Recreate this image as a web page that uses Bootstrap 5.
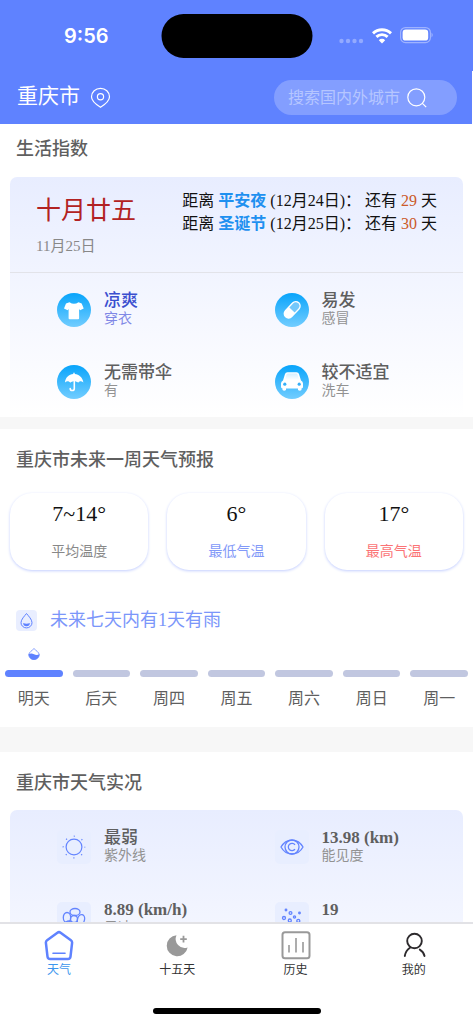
<!DOCTYPE html>
<html lang="zh-CN">
<head>
<meta charset="utf-8">
<meta name="viewport" content="width=device-width, initial-scale=1">
<title>天气</title>
<link href="https://cdn.jsdelivr.net/npm/bootstrap@5.3.0/dist/css/bootstrap.min.css" rel="stylesheet">
<style>
  :root { --brand: #5f82ff; --ink: #5f5f5f; --muted: #929292; }
  body { font-family: "Liberation Serif", "Noto Sans CJK SC", serif; color: #111; background: #fff; line-height: 24px; }
  svg { display: block; flex: none; }
  .brand-bg { background: var(--brand); }

  .status { height: 71px; padding: 0 40px 0 64px; font: 600 20px/24px Inter, sans-serif; }
  .island { width: 151px; height: 44px; left: 50%; top: 14px; transform: translateX(-50%); border-radius: 22px; background: #000; }
  .topbar { height: 53px; padding: 0 15px 0 17px; }
  .city { font-size: 21px; padding-bottom: 4px; }
  .search { width: 183px; height: 35px; padding: 0 30px 0 14px; background: #839eff; }
  .search input { min-width: 0; font-size: 16px; line-height: 24px; background: none; outline: 0; font-family: inherit; color: #fff; }
  .search input::placeholder { color: #b6c6ff; opacity: 1; }

  .feed { min-height: 0; scrollbar-width: none; }
  .feed::-webkit-scrollbar { display: none; }
  .heading { font-size: 18px; line-height: 24px; font-weight: 500; color: var(--ink); margin: 0; padding: 13px 16px 16px; }
  .heading-lg { padding-top: 19px; padding-bottom: 15px; }
  .divider { height: 12px; background: #f7f7f7; }
  .divider-lg { height: 25px; }

  .panel { margin: 0 10px; padding-bottom: 9px; border-radius: 7px 7px 0 0; background: linear-gradient(#e8edff, #fff 240px); }
  .almanac { height: 96px; padding: 12px 26px 0 26px; border-bottom: 1px solid #e2e3e9; }
  .lunar { font-size: 25px; line-height: 44px; color: #b22222; }
  .solar { font-size: 15px; line-height: 26px; color: #888; }
  .countdown { font-size: 16px; line-height: 23px; white-space: nowrap; }
  .countdown strong { color: #1e90f0; }
  .days { color: #cb5a28; }

  .facts { padding: 19px 9px 0; row-gap: 36px; }
  .fact { padding-left: 38px; gap: 13px; height: 36px; }
  .fact-name { font-size: 17px; line-height: 18px; font-weight: 500; color: var(--ink); }
  .fact-note { font-size: 14px; line-height: 18px; color: var(--muted); }
  .fact.active .fact-name { color: #3b4fcf; }
  .fact.active .fact-note { color: #8088e6; }

  .temps { gap: 19px; padding: 6px 10px 0; }
  .temp { height: 77px; border-radius: 22px; box-shadow: 0 1px 3px #c3ceff; background: #fff; padding-top: 9px; }
  .temp-value { font-size: 22px; line-height: 24px; }
  .temp-label { font-size: 14px; line-height: 24px; margin-top: 14px; color: #888; }
  .low { color: #8299f8; }
  .high { color: #fb7476; }
  .rain { font-size: 18px; color: #7b96fa; gap: 13px; padding: 38px 16px 16px; }
  .day { padding: 0 5px; font-size: 16px; color: var(--ink); }
  .day-mark { height: 12px; margin-bottom: 10px; }
  .day-bar { height: 7px; border-radius: 4px; background: #c1c7e0; margin-bottom: 10px; }
  .day-bar.on { background: var(--brand); }

  .tabs { border-top: 2px solid #e2e2e6; height: 102px; }
  .tab { color: #333; font-size: 12px; line-height: 16px; padding-top: 6px; gap: 1px; text-decoration: none; }
  .tab.active { color: #3c96ee; }
  .home-bar { width: 168px; height: 6px; border-radius: 3px; background: #000; margin: 0 auto 10px; }
</style>
</head>
<body class="vh-100 d-flex flex-column overflow-hidden">
<svg width="0" height="0" class="position-absolute" aria-hidden="true">
  <defs>
    <linearGradient id="sky" x2="0" y2="1"><stop stop-color="#08a4fb"/><stop offset="1" stop-color="#72cdff"/></linearGradient>
    <linearGradient id="fade" x2="0" y2="1"><stop stop-color="#d5efff"/><stop offset="1" stop-color="#fff"/></linearGradient>
  </defs>
</svg>

<header class="brand-bg text-white flex-shrink-0">
  <div class="status position-relative d-flex align-items-center justify-content-between">
    <span>9:56</span>
    <span class="island position-absolute"></span>
    <span class="d-flex align-items-center gap-2">
      <svg width="25" height="18" viewBox="0 0 25 18" fill="#93aaff"><circle cx="2.500" cy="14" r="2.200"/><circle cx="9" cy="14" r="2.200"/><circle cx="15.500" cy="14" r="2.200"/><circle cx="22" cy="14" r="2.200"/></svg>
      <svg width="20" height="16" viewBox="0 0 20 16" fill="none" stroke="#fff" stroke-width="2.900"><path d="M1 5.400a13 13 0 0 1 18 0"/><path d="M4.400 8.900a8 8 0 0 1 11.200 0"/><path d="M10 15.500l3.200-3.300a4.500 4.500 0 0 0-6.400 0z" fill="#fff" stroke="none"/></svg>
      <svg width="33" height="17" viewBox="0 0 33 17"><rect x=".6" y=".6" width="29.800" height="15" rx="4.800" fill="none" stroke="#9fb3ff" stroke-width="1.200"/><rect x="2.600" y="2.600" width="25.600" height="11" rx="3.200" fill="#fff"/><path d="M31.500 5.500q2.500 2.500 0 5z" fill="#9fb3ff"/></svg>
    </span>
  </div>
  <div class="topbar d-flex align-items-center border-end border-white">
    <span class="city">重庆市</span>
    <svg class="ms-2" width="24" height="22" viewBox="0 0 24 22" fill="none" stroke="#fff" stroke-width="1.200"><path d="M12.500 20.200C9.500 18.400 3.500 14.600 3.500 9.800a9 8.500 0 0 1 18 0c0 4.800-6 8.600-9 10.400z"/><circle cx="12.500" cy="9.700" r="3.100"/></svg>
    <label class="search ms-auto d-flex align-items-center rounded-pill">
      <input type="text" class="border-0 p-0 flex-fill" placeholder="搜索国内外城市" aria-label="搜索国内外城市">
      <svg width="20" height="20" viewBox="0 0 20 20" fill="none" stroke="#fff" stroke-width="1.200"><circle cx="9.300" cy="9.300" r="8.500"/><path d="M15.400 15.400l3.800 3.800"/></svg>
    </label>
  </div>
</header>

<main class="feed flex-fill overflow-auto">
  <section>
    <h2 class="heading">生活指数</h2>
    <div class="panel">
      <div class="almanac d-flex justify-content-between">
        <div>
          <div class="lunar">十月廿五</div>
          <div class="solar">11月25日</div>
        </div>
        <div class="countdown">
          <div>距离 <strong>平安夜</strong> (12月24日)： 还有 <span class="days">29</span> 天</div>
          <div>距离 <strong>圣诞节</strong> (12月25日)： 还有 <span class="days">30</span> 天</div>
        </div>
      </div>
      <div class="facts row g-0 pb-2">
        <div class="col-6 fact active d-flex align-items-center">
          <svg width="34" height="34" viewBox="0 0 34 34"><circle cx="17" cy="17" r="17" fill="url(#sky)"/><path d="M12.500 9.200q4.500 3 9 0l3.200 1.300 2 5-3.600 1.700-1-1.200v9.200q0 1-1 1h-8.500q-1 0-1-1V16l-1 1.200L7 15.500l2-5z" fill="#fff"/></svg>
          <div><div class="fact-name">凉爽</div><div class="fact-note">穿衣</div></div>
        </div>
        <div class="col-6 fact d-flex align-items-center">
          <svg width="34" height="34" viewBox="0 0 34 34"><circle cx="17" cy="17" r="17" fill="url(#sky)"/><g transform="rotate(-47 17 17)"><rect x="7" y="12" width="20.500" height="10" rx="5" fill="#fff"/><path d="M17 13.400h5.500a3.600 3.600 0 0 1 0 7.200H17z" fill="#74c8fb"/></g></svg>
          <div><div class="fact-name">易发</div><div class="fact-note">感冒</div></div>
        </div>
        <div class="col-6 fact d-flex align-items-center">
          <svg width="34" height="34" viewBox="0 0 34 34"><circle cx="17" cy="17" r="17" fill="url(#sky)"/><path d="M8 17.500C8.500 12 12 9.500 16.300 9V8q.7-1 1.400 0v1c4.300.5 7.800 3 8.700 8.500-2.200-1.800-4-1.500-5.200.3-2.300-2-5.700-2-8 0-1.200-1.800-3.200-2.100-5.200-.3z" fill="#fff"/><path d="M17.300 16v7.500a2 2 0 0 1-4.100 0" fill="none" stroke="#fff" stroke-width="1.600" stroke-linecap="round"/></svg>
          <div><div class="fact-name">无需带伞</div><div class="fact-note">有</div></div>
        </div>
        <div class="col-6 fact d-flex align-items-center">
          <svg width="34" height="34" viewBox="0 0 34 34"><circle cx="17" cy="17" r="17" fill="url(#sky)"/><path d="M8 15.500L10 9q.5-1.800 2.500-1.800h9Q23.500 7.200 24 9l2 6.500q2 1 2 3V22q0 1.300-1.500 1.500V25q-1.700 1.600-3.500 0v-1.500H11V25q-1.800 1.600-3.500 0v-1.500Q6 23.300 6 22v-3.500q0-2 2-3z" fill="#fff"/><path d="M10 14.800l1.500-5.300q.3-1 1.500-1h8q1.200 0 1.500 1l1.500 5.300z" fill="url(#fade)"/><circle cx="9.800" cy="19.200" r="1.600" fill="#35aff8"/><circle cx="24.200" cy="19.200" r="1.600" fill="#35aff8"/></svg>
          <div><div class="fact-name">较不适宜</div><div class="fact-note">洗车</div></div>
        </div>
      </div>
    </div>
  </section>
  <div class="divider"></div>

  <section>
    <h2 class="heading heading-lg">重庆市未来一周天气预报</h2>
    <div class="temps d-flex text-center">
      <div class="temp flex-fill w-100"><div class="temp-value">7~14°</div><div class="temp-label">平均温度</div></div>
      <div class="temp flex-fill w-100"><div class="temp-value">6°</div><div class="temp-label low">最低气温</div></div>
      <div class="temp flex-fill w-100"><div class="temp-value">17°</div><div class="temp-label high">最高气温</div></div>
    </div>
    <div class="rain d-flex align-items-center">
      <svg width="21" height="21" viewBox="0 0 21 21"><rect width="21" height="21" rx="4" fill="#e9eeff"/><path d="M10.500 3.500C8.500 6 5 9.500 5 12.700a5.500 5.200 0 0 0 11 0C16 9.500 12.500 6 10.500 3.500z" fill="none" stroke="#5f82ff"/><path d="M7.200 13q3.300 1.500 6.600 0a3.300 3.300 0 0 1-6.600 0z" fill="#5f82ff"/></svg>
      <span>未来七天内有1天有雨</span>
    </div>
    <div class="d-flex text-center pb-3">
      <div class="day flex-fill w-100"><div class="day-mark d-flex justify-content-center"><svg width="12" height="12" viewBox="0 0 12 12"><path d="M6 .5C4.500 2.300.8 4.300.8 6.600a5.200 5 0 0 0 10.400 0C11.200 4.300 7.500 2.300 6 .5z" fill="#fff" stroke="#8aa3ff"/><path d="M.5 6.200q2.700-1.600 5.500 0t5.500-.2A5.500 5.600 0 0 1 .5 6.200z" fill="#5f82ff"/></svg></div><div class="day-bar on"></div>明天</div>
      <div class="day flex-fill w-100"><div class="day-mark"></div><div class="day-bar"></div>后天</div>
      <div class="day flex-fill w-100"><div class="day-mark"></div><div class="day-bar"></div>周四</div>
      <div class="day flex-fill w-100"><div class="day-mark"></div><div class="day-bar"></div>周五</div>
      <div class="day flex-fill w-100"><div class="day-mark"></div><div class="day-bar"></div>周六</div>
      <div class="day flex-fill w-100"><div class="day-mark"></div><div class="day-bar"></div>周日</div>
      <div class="day flex-fill w-100"><div class="day-mark"></div><div class="day-bar"></div>周一</div>
    </div>
  </section>
  <div class="divider divider-lg"></div>

  <section>
    <h2 class="heading heading-lg">重庆市天气实况</h2>
    <div class="panel">
      <div class="facts row g-0">
        <div class="col-6 fact d-flex align-items-center">
          <svg width="34" height="34" viewBox="0 0 34 34"><rect width="34" height="34" rx="5" fill="#e8eeff"/><circle cx="17" cy="17" r="7.900" fill="none" stroke="#6384ff" stroke-width="1.200"/><circle cx="17" cy="17" r="10.800" fill="none" stroke="#6384ff" stroke-width="1.200" stroke-dasharray="1.200 7.282" stroke-dashoffset=".6"/></svg>
          <div><div class="fact-name">最弱</div><div class="fact-note">紫外线</div></div>
        </div>
        <div class="col-6 fact d-flex align-items-center">
          <svg width="34" height="34" viewBox="0 0 34 34"><rect width="34" height="34" rx="5" fill="#e8eeff"/><g fill="none" stroke="#6384ff" stroke-width="1.300"><path d="M6 17c5-9.300 17-9.300 22 0-5 9.300-17 9.300-22 0z"/><circle cx="17" cy="17" r="7"/><path d="M20 14.800a3.700 3.700 0 1 0 0 4.400"/></g></svg>
          <div><div class="fact-name fw-bold">13.98 (km)</div><div class="fact-note">能见度</div></div>
        </div>
        <div class="col-6 fact d-flex align-items-center">
          <svg width="34" height="34" viewBox="0 0 34 34"><rect width="34" height="34" rx="5" fill="#e8eeff"/><g fill="none" stroke="#6384ff" stroke-width="1.300"><circle cx="17" cy="17" r="3.500"/><ellipse cx="18" cy="10" rx="5" ry="3.500"/><ellipse cx="24" cy="17.500" rx="3.500" ry="5" transform="rotate(15 24 17.500)"/><ellipse cx="19" cy="24" rx="5" ry="3.500"/><ellipse cx="10" cy="15.500" rx="3.700" ry="5"/><ellipse cx="12" cy="22.500" rx="4" ry="3.500"/></g></svg>
          <div><div class="fact-name fw-bold">8.89 (km/h)</div><div class="fact-note">风速</div></div>
        </div>
        <div class="col-6 fact d-flex align-items-center">
          <svg width="34" height="34" viewBox="0 0 34 34"><rect width="34" height="34" rx="5" fill="#e8eeff"/><g fill="none" stroke="#6384ff" stroke-width="1.300"><circle cx="11" cy="8" r=".8"/><circle cx="15.500" cy="11" r="1.400"/><circle cx="24.500" cy="11" r=".8"/><circle cx="9" cy="16" r="1.500"/><circle cx="19.500" cy="15" r="1.100"/><circle cx="14.800" cy="18.500" r="1.500"/><circle cx="23.300" cy="18.800" r="1.500"/></g></svg>
          <div class="align-self-start"><div class="fact-name fw-bold">19</div></div>
        </div>
      </div>
    </div>
  </section>
</main>

<nav class="tabs bg-white flex-shrink-0 d-flex flex-column justify-content-between">
  <div class="d-flex">
    <a href="#" class="tab active flex-fill w-100 d-flex flex-column align-items-center" aria-current="page">
      <svg width="30" height="31" viewBox="0 0 30 31" fill="none" stroke="#5f82ff"><path d="M13.400 2.700q1.600-1.200 3.200 0l10.300 7.500q1.400 1 1.200 2.700l-1.600 13.800q-.3 2.300-2.600 2.300H6.100q-2.300 0-2.600-2.300L1.900 12.900q-.2-1.700 1.200-2.700z" stroke-width="2.500"/><path d="M9 23.200h12" stroke-width="1.600" stroke-linecap="round"/></svg>
      天气</a>
    <a href="#" class="tab flex-fill w-100 d-flex flex-column align-items-center">
      <svg width="30" height="31" viewBox="0 0 30 31"><path d="M14.500 5.300A10.500 10.500 0 1 0 25.600 17.500 9 9 0 0 1 14.500 5.300z" fill="#999"/><path d="M21.500 5.800v6.600M18.200 9.100h6.600" stroke="#999" stroke-width="1.800"/></svg>
      十五天</a>
    <a href="#" class="tab flex-fill w-100 d-flex flex-column align-items-center">
      <svg width="30" height="31" viewBox="0 0 30 31" fill="none" stroke="#999"><rect x="1.500" y="2.200" width="27" height="26" rx="2.500" stroke-width="2"/><path d="M8 15v7.500M15 8v14.500M22 12v10.500" stroke-width="1.600"/></svg>
      历史</a>
    <a href="#" class="tab flex-fill w-100 d-flex flex-column align-items-center">
      <svg width="30" height="31" viewBox="0 0 30 31" fill="none" stroke="#2d2a2d" stroke-width="1.900" stroke-linecap="round"><circle cx="15.500" cy="11" r="7.300"/><path d="M5.800 26c.5-3.600 2.300-6.300 5.200-8.300M20.800 19.600c2.500 1.500 4.200 3.700 4.700 6.400"/></svg>
      我的</a>
  </div>
  <div class="home-bar"></div>
</nav>
<script src="https://cdn.jsdelivr.net/npm/bootstrap@5.3.0/dist/js/bootstrap.bundle.min.js"></script>
</body>
</html>
